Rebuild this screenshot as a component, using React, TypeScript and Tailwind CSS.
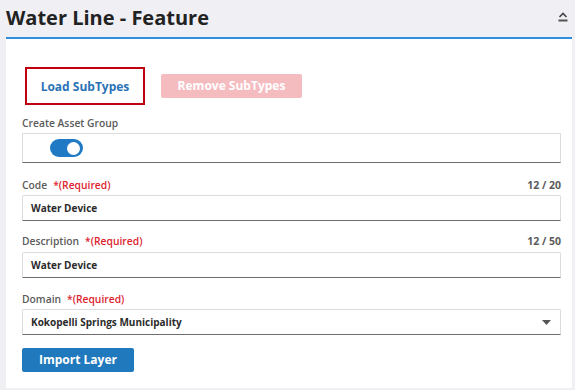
import { useState } from 'react';

const font = { fontFamily: '"Open Sans", "Liberation Sans", sans-serif' };

function FieldLabel({ label, required, count }: { label: string; required?: boolean; count?: string }) {
    return (
        <div className="flex items-center justify-between h-[14px] text-[10.3px] leading-[14px]">
            <div className="flex items-center">
                <span className="font-semibold text-[#5b5b5b]">{label}</span>
                {required && <span className="ml-[6px] font-semibold text-[#dc2430]">*(Required)</span>}
            </div>
            {count && <span className="font-bold text-[10.5px] text-[#5b5b5b]">{count}</span>}
        </div>
    );
}

function TextBox({ value }: { value: string }) {
    return (
        <div className="flex items-center h-[26px] border border-[#dcdcdc] border-b-[#6e6e6e] rounded-t-[2px] pl-[8px] text-[10px] font-bold text-[#2b2b2b]">
            {value}
        </div>
    );
}

export default function App() {
    const [on, setOn] = useState(true);

    return (
        <div className="w-[575px] h-[390px] bg-[#efeff4] overflow-hidden" style={font}>
            <div className="flex items-center justify-between h-[37px] pl-[6px] pr-[6px]">
                <h1 className="text-[20px] font-bold text-[#222] leading-none mt-[-2px]">Water Line - Feature</h1>
                <svg width="10" height="12" viewBox="0 0 10 12" className="mt-[-4px] mr-[1px]">
                    <polyline points="1.5,6 5,2.5 8.5,6" fill="none" stroke="#444" strokeWidth="1.6" />
                    <rect x="0.5" y="8.5" width="9" height="2" fill="#555" />
                </svg>
            </div>
            <div className="ml-[6px] mr-[3px] h-[2px] bg-[#2e8fe2]" />
            <div className="ml-[6px] mr-[3px] h-[349px] bg-white pl-4 pr-[11px] pt-[28px]">
                <div className="flex items-center h-[38px]">
                    <button className="ml-[3px] w-[120px] h-[38px] pt-[2px] border-2 border-[#c10010] text-[12px] font-bold text-[#2a73b5]">
                        Load SubTypes
                    </button>
                    <button className="ml-[16px] w-[141px] h-[24px] rounded-[2px] bg-[#f5bcc0] text-[12px] font-bold text-white">
                        Remove SubTypes
                    </button>
                </div>

                <div className="mt-[11px]">
                    <FieldLabel label="Create Asset Group" />
                </div>
                <div className="mt-[3px] flex items-center h-[30px] border border-[#dcdcdc] border-b-[#6e6e6e] pl-[27px]">
                    <button
                        onClick={() => setOn(!on)}
                        className={`relative w-[33px] h-[18px] rounded-full ${on ? 'bg-[#2079c4]' : 'bg-[#bbb]'}`}
                    >
                        <span
                            className={`absolute top-[2.5px] w-[13px] h-[13px] rounded-full bg-white ${on ? 'right-[3px]' : 'left-[3px]'}`}
                        />
                    </button>
                </div>

                <div className="mt-[15px]">
                    <FieldLabel label="Code" required count="12 / 20" />
                </div>
                <div className="mt-[3px]">
                    <TextBox value="Water Device" />
                </div>

                <div className="mt-[13px]">
                    <FieldLabel label="Description" required count="12 / 50" />
                </div>
                <div className="mt-[4px]">
                    <TextBox value="Water Device" />
                </div>

                <div className="mt-[14px]">
                    <FieldLabel label="Domain" required />
                </div>
                <div className="mt-[3px] flex items-center justify-between h-[26px] border border-[#dcdcdc] border-b-[#6e6e6e] rounded-t-[2px] pl-[8px] pr-[9px] text-[10px] font-bold text-[#2b2b2b]">
                    <span>Kokopelli Springs Municipality</span>
                    <svg width="9" height="5" viewBox="0 0 9 5">
                        <polygon points="0,0 9,0 4.5,5" fill="#555" />
                    </svg>
                </div>

                <button className="mt-[13px] w-[112px] h-[24px] rounded-[2px] bg-[#2179bd] text-[12px] font-bold text-white">
                    Import Layer
                </button>
            </div>
        </div>
    );
}
